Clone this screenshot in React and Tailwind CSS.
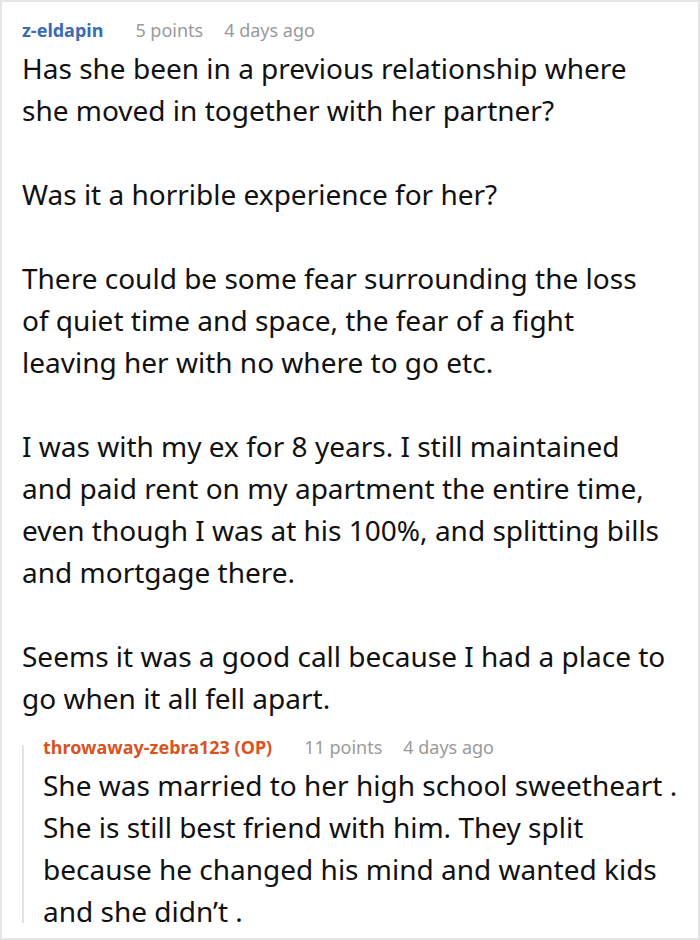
const font = { fontFamily: '"Noto Sans", "Open Sans", sans-serif' };

function Meta({ name, nameClass, points, age }) {
  return (
    <div className="flex items-baseline text-[18px] leading-6 whitespace-nowrap">
      <span className={`font-bold ${nameClass}`}>{name}</span>
      <span className="ml-[32px] text-[#9a9a9a]">{points}</span>
      <span className="ml-[21px] text-[#9a9a9a]">{age}</span>
    </div>
  );
}

export default function App() {
  const paras = [
    "Has she been in a previous relationship where she moved in together with her partner?",
    "Was it a horrible experience for her?",
    "There could be some fear surrounding the loss of quiet time and space, the fear of a fight leaving her with no where to go etc.",
    "I was with my ex for 8 years. I still maintained and paid rent on my apartment the entire time, even though I was at his 100%, and splitting bills and mortgage there.",
    "Seems it was a good call because I had a place to go when it all fell apart.",
  ];
  return (
    <div style={font} className="w-[700px] h-[940px] bg-white border-2 border-[#e6e6e6] overflow-hidden">
      <div className="pl-[20px] pr-2 pt-[16px]">
        <Meta name="z-eldapin" nameClass="text-[#3a6cb4]" points="5 points" age="4 days ago" />
        <div className="mt-[5px] text-[28px] leading-[42px] text-[#111] w-[646px]">
          {paras.map((p, i) => (
            <p key={i} className={i < paras.length - 1 ? "mb-[42px]" : ""}>{p}</p>
          ))}
        </div>
        <div className="mt-[16px] flex">
          <div className="w-[2px] shrink-0 bg-[#e4e4e4] mt-[10px] mb-[9px]" />
          <div className="pl-[19px]">
            <Meta name="throwaway-zebra123 (OP)" nameClass="text-[#d9531e]" points="11 points" age="4 days ago" />
            <p className="mt-[5px] text-[28px] leading-[42px] text-[#111] w-[636px]">
              She was married to her high school sweetheart . She is still best friend with him. They split because he changed his mind and wanted kids and she didn’t .
            </p>
          </div>
        </div>
      </div>
    </div>
  );
}
